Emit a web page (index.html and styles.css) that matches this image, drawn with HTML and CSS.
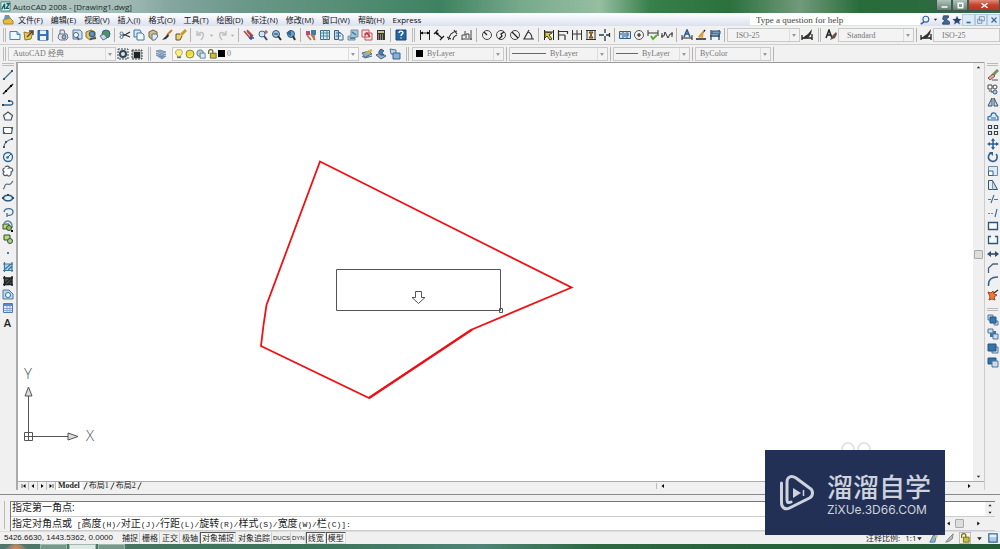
FILE: index.html
```html
<!DOCTYPE html>
<html lang="zh-CN">
<head>
<meta charset="utf-8">
<title>AutoCAD 2008 - [Drawing1.dwg]</title>
<link rel="stylesheet" href="styles.css">
</head>
<body>
<svg class="defs" aria-hidden="true">
<symbol id="new" viewBox="0 0 12 12"><path d="M1 2.500h7l3 3V10.500H1z" fill="#eef8ff" stroke="#4582ac"/><path d="M8 2.500v3h3" fill="#9cc6e0" stroke="#4582ac"/></symbol>
<symbol id="open" viewBox="0 0 12 12"><path d="M1 3l4 1 5-2-2 8-6 1z" fill="#e8c95c" stroke="#9a7420"/><path d="M4 8l5-5M6 2h4v4" fill="none" stroke="#4c4937" stroke-width="1.400"/></symbol>
<symbol id="save" viewBox="0 0 12 12"><path d="M1 1.500h10v9.500H1z" fill="#3a76bb" stroke="#28588f"/><path d="M3 1.500h6v3.500H3zM3 7h6v4H3z" fill="#e9f2fa"/></symbol>
<symbol id="print" viewBox="0 0 12 12"><path d="M3 5V1h4l1 4M2 5h8l1 4-2 2H3L1 9z" fill="#e3e6ed" stroke="#6a7387"/><circle cx="7" cy="8" r="2" fill="#a3b5cf" stroke="#4f6686"/></symbol>
<symbol id="preview" viewBox="0 0 12 12"><path d="M2 1h7l2 2v7H2z" fill="#cfe1f2" stroke="#55799f"/><circle cx="5" cy="6" r="2.500" fill="#fff" stroke="#44617f"/><path d="M6 8l2 3" stroke="#44617f" stroke-width="1.500"/></symbol>
<symbol id="publish" viewBox="0 0 12 12"><path d="M1 3l5-2 4 2v5l-5 3-4-3z" fill="#e6c758" stroke="#87703a"/><circle cx="7" cy="5" r="2.800" fill="#5a8fc8" stroke="#35567f"/><path d="M5 10l6-1" stroke="#4f5259" stroke-width="2"/></symbol>
<symbol id="globe" viewBox="0 0 12 12"><circle cx="7" cy="5" r="4" fill="#4c9464" stroke="#35608d"/><path d="M1 7l4-2 3 4-4 2z" fill="#cbd8e6" stroke="#5e7590"/></symbol>
<symbol id="cut" viewBox="0 0 12 12"><path d="M4 7l7-4M4 5l7 3" stroke="#333" stroke-width="1.200"/><circle cx="2.500" cy="4.500" r="1.500" fill="none" stroke="#51779b"/><circle cx="2.500" cy="8" r="1.500" fill="none" stroke="#51779b"/></symbol>
<symbol id="copy" viewBox="0 0 12 12"><path d="M1 1h6l1 2v5H1z" fill="#d6eafa" stroke="#3f76a6"/><path d="M4 4h5l2 2v5H4z" fill="#f5fbff" stroke="#3f76a6"/></symbol>
<symbol id="paste" viewBox="0 0 12 12"><path d="M2 3l4-2 4 2v5l-4 3-4-3z" fill="#cfbf8c" stroke="#716137"/><path d="M5 5h4l2 2-3 4H5z" fill="#e3ecf5" stroke="#5d7490"/></symbol>
<symbol id="brush" viewBox="0 0 12 12"><path d="M11 1L6 6" stroke="#c68436" stroke-width="2"/><path d="M7 5L2 10l-1 1 4-1 3-3z" fill="#2f2e31"/></symbol>
<symbol id="pencil" viewBox="0 0 12 12"><path d="M11 1L4 8" stroke="#c99a2c" stroke-width="3"/><path d="M5 5H1v6h4l2-4" fill="#edd473" stroke="#695422"/></symbol>
<symbol id="undo" viewBox="0 0 12 12"><path d="M3 5C7 1 11 5 6 11M2 2v4h4" fill="none" stroke="#bfc0c3" stroke-width="1.500"/></symbol>
<symbol id="redo" viewBox="0 0 12 12"><path d="M9 5C5 1 1 5 6 11M10 2v4H6" fill="none" stroke="#bfc0c3" stroke-width="1.500"/></symbol>
<symbol id="down" viewBox="0 0 12 12"><path d="M2 4h8L6 9z" fill="currentColor"/></symbol>
<symbol id="pan" viewBox="0 0 12 12"><path d="M1 2l6 7 2-1-5-6M4 1l6 6" stroke="#a64f4b" stroke-width="1.600" fill="none"/><path d="M8 6v5M6 9h5" stroke="#2e5890" stroke-width="1.400"/></symbol>
<symbol id="zoomin" viewBox="0 0 12 12"><circle cx="5" cy="5" r="3" fill="#cfe6f3" stroke="#406990"/><path d="M7 7l3 4" stroke="#3c5168" stroke-width="2"/><path d="M9 1v4M7 3h4" stroke="#8c4c4c"/></symbol>
<symbol id="zoomwin" viewBox="0 0 12 12"><circle cx="5" cy="5" r="3.500" fill="#9cc0d9" stroke="#35597e"/><path d="M7 7l3 4" stroke="#333" stroke-width="2"/><path d="M3 5h4" stroke="#23415f"/></symbol>
<symbol id="zoomprev" viewBox="0 0 12 12"><circle cx="6" cy="5" r="3.500" fill="#67a4c5" stroke="#315a7c"/><path d="M8 7l2 4" stroke="#333" stroke-width="2"/><path d="M1 4l5-3v6z" fill="#31659b"/></symbol>
<symbol id="props" viewBox="0 0 12 12"><path d="M1 2h4v4H1z" fill="#b74c74"/><path d="M6 1h5v5H6z" fill="#467ba9"/><path d="M2 6l4 5M6 5l4 6M9 6v5" stroke="#b96d46" stroke-width="1.600"/></symbol>
<symbol id="grid" viewBox="0 0 12 12"><path d="M1.500 1.500h9v9h-9z" fill="#d8ebf2" stroke="#3f697e"/><path d="M1 4h10M1 7h10M4.500 1v10M8 1v10" stroke="#4b879e"/></symbol>
<symbol id="palette" viewBox="0 0 12 12"><path d="M1.500 1.500h4v9h-4z" fill="#bdd4e8" stroke="#3b6287"/><path d="M6 3l4 3v5H6" fill="#e9f2fa" stroke="#3b6287"/><path d="M3 4h5M3 7h5" stroke="#356f9d"/></symbol>
<symbol id="sheet" viewBox="0 0 12 12"><path d="M4 1h7v7H8v3H1V7h3z" fill="#9fc6dc" stroke="#7e8f9d"/><path d="M5 3l4 3M3 9h5" stroke="#427394" stroke-width="1.500"/></symbol>
<symbol id="markup" viewBox="0 0 12 12"><path d="M1 1h7v7H1zM4 4h7v7H4z" fill="#f9e7e7" stroke="#c3525a"/><path d="M4 6l2-2 3 4" fill="none" stroke="#b6303b" stroke-width="1.400"/></symbol>
<symbol id="calc" viewBox="0 0 12 12"><path d="M2 1h8v10H2z" fill="#3a3532"/><path d="M3 2h6v2H3z" fill="#c5c886"/><path d="M3 6h6M3 8h6M3 10h6" stroke="#d9d2c5" stroke-dasharray="1 1"/></symbol>
<symbol id="help" viewBox="0 0 12 12"><path d="M1 1h10v10H1z" fill="#27659f" stroke="#184773"/><path d="M4 4c0-3 4-2 4 0 0 1-2 1-2 3M6 8.500v1" fill="none" stroke="#fff" stroke-width="1.400"/></symbol>
<symbol id="dlin" viewBox="0 0 12 12"><path d="M1.500 1v10M10.500 1v10M1 4h10" stroke="#222" fill="none"/><path d="M1 4l3-1.500v3zM11 4L8 2.500v3z"/></symbol>
<symbol id="dali" viewBox="0 0 12 12"><path d="M3 4l6 5M1 5l4-4M7 11l4-4" stroke="#222" stroke-width="1.300"/><path d="M2 3l4 1-2 2z"/></symbol>
<symbol id="darc" viewBox="0 0 12 12"><path d="M1.500 11C2 6 5 3 10 2M6 11c0-3 1-4 4-5M0 8l4 2M7 1l3 4" stroke="#333" fill="none" stroke-width="1.200"/></symbol>
<symbol id="dord" viewBox="0 0 12 12"><path d="M1 11V6h3V2M1 10h10M5 9V5h3v4M10 1v10" stroke="#444" fill="none"/></symbol>
<symbol id="drad" viewBox="0 0 12 12"><circle cx="6" cy="6" r="4.500" fill="none" stroke="#444"/><path d="M6 6L3 3" stroke="#222" stroke-width="1.300"/></symbol>
<symbol id="djog" viewBox="0 0 12 12"><circle cx="6" cy="6" r="4.500" fill="none" stroke="#444"/><path d="M9 3L6 5l1 2-3 3" fill="none" stroke="#222" stroke-width="1.300"/></symbol>
<symbol id="ddia" viewBox="0 0 12 12"><circle cx="6" cy="6" r="4.500" fill="none" stroke="#444"/><path d="M3 3l6 6" stroke="#222" stroke-width="1.300"/></symbol>
<symbol id="dang" viewBox="0 0 12 12"><path d="M6 1L1 10h10M5 3c3 1 4 3 4 7" fill="none" stroke="#333" stroke-width="1.200"/></symbol>
<symbol id="dquick" viewBox="0 0 12 12"><path d="M1.500 1v10M10.500 1v10M1 3h10" stroke="#222"/><path d="M2 3l7 1-3 2 3 4-2 1-3-4-2 2z" fill="#d9cf3b" stroke="#413e21"/></symbol>
<symbol id="dbase" viewBox="0 0 12 12"><path d="M1.500 1v10M1 2.500h10M1 6h7M8 6v5M10.500 2v3" stroke="#333" stroke-width="1.200" fill="none"/></symbol>
<symbol id="dcont" viewBox="0 0 12 12"><path d="M1.500 1v10M6 1v10M10.500 1v10M1 5h10" stroke="#333" fill="none"/></symbol>
<symbol id="dspace" viewBox="0 0 12 12"><path d="M1 1.500h10M1 10.500h10M2 1v10M10 1v10" stroke="#333"/><path d="M4 3h4L6 6l2 3H4l2-3z" fill="#bd822d" stroke="#674918"/></symbol>
<symbol id="dbreak" viewBox="0 0 12 12"><path d="M6 0v4M6 7v5M0 6h5M7 6h4M10.500 4v4" stroke="#24384b" stroke-width="1.300"/></symbol>
<symbol id="dtol" viewBox="0 0 12 12"><path d="M.5 2.500h11v7H.5z" fill="#cce0f1" stroke="#31618b"/><path d="M4 2v8M8 2v8M1 5h2M5 5h2M9 4v3M5 7h2" stroke="#31618b"/></symbol>
<symbol id="dcen" viewBox="0 0 12 12"><circle cx="6" cy="6" r="4.500" fill="none" stroke="#555"/><path d="M6 4v4M4 6h4" stroke="#222" stroke-width="1.200"/></symbol>
<symbol id="dinsp" viewBox="0 0 12 12"><path d="M1 1v6M11 1v6M1 4h10" stroke="#333"/><path d="M4 7l2 3 4-4" fill="none" stroke="#5cab2f" stroke-width="2"/></symbol>
<symbol id="djl" viewBox="0 0 12 12"><path d="M0 7h3l1-4 3 6 2-4h3M1 4v5M11 3v5" stroke="#333" fill="none"/></symbol>
<symbol id="dedit" viewBox="0 0 12 12"><path d="M3 8l3-7 3 7M4 5h4" fill="none" stroke="#285c91" stroke-width="1.600"/><path d="M1 6v5M11 6v5M1 9h10" stroke="#222"/></symbol>
<symbol id="dtedit" viewBox="0 0 12 12"><path d="M1 10h10M10 1L4 8" stroke="#222" stroke-width="1.500"/><path d="M9 1L3 8l5 1z" fill="#e1a33d"/></symbol>
<symbol id="dupd" viewBox="0 0 12 12"><path d="M2 1v10M10 1v10M1 7h10" stroke="#27496a" stroke-width="1.300"/><path d="M3 2h8v3H3z" fill="#6f9fc3" stroke="#315374"/></symbol>
<symbol id="dstyle" viewBox="0 0 12 12"><path d="M1 6v5M11 5v6M1 9h10" stroke="#222" stroke-width="1.300"/><path d="M11 0L7 5 4 7l-3 3 6-1 3-4z" fill="#342f28"/></symbol>
<symbol id="tstyle" viewBox="0 0 12 12"><path d="M1 9l3-8 3 8M2 6h4" fill="none" stroke="#222" stroke-width="1.500"/><path d="M11 3L7 7l-2 4 5-2 2-4z" fill="#6d5142"/></symbol>
<symbol id="gear" viewBox="0 0 12 12"><path d="M1 1h10v10H1z" fill="#dfe6ea" stroke="#394852" stroke-dasharray="2 1"/><circle cx="6" cy="6" r="3" fill="none" stroke="#33434f" stroke-width="2"/></symbol>
<symbol id="wspace" viewBox="0 0 12 12"><path d="M1 2h10v9H1z" fill="#adb8be" stroke="#444" stroke-dasharray="2 1"/><path d="M3 4h6v6H3z" fill="#232323"/></symbol>
<symbol id="layers" viewBox="0 0 12 12"><path d="M1 3l4-1 6 2-4 2zM1 5l6 2 4-1-4 3zM1 7l6 2 4-1-4 3z" fill="#8dacd0" stroke="#607fa5" stroke-width=".7"/></symbol>
<symbol id="bulb" viewBox="0 0 12 12"><path d="M4 8C-1 3 4 0 6 1c5-1 5 4 2 7v2H4z" fill="#f8ee8a" stroke="#a99833"/><path d="M4 10h4" stroke="#4f6787" stroke-width="2"/></symbol>
<symbol id="sun" viewBox="0 0 12 12"><circle cx="6" cy="6" r="4.800" fill="#eadc3e" stroke="#777733"/><path d="M3 8c2 2 5 1 6-1" fill="none" stroke="#fff7a2"/></symbol>
<symbol id="freeze" viewBox="0 0 12 12"><circle cx="5" cy="5" r="4" fill="#aecbd9" stroke="#61747e"/><path d="M5 5h6v6H5z" fill="#dcecf4" stroke="#59798d"/></symbol>
<symbol id="lock" viewBox="0 0 12 12"><path d="M2 6V3c0-3 5-3 5 0v3" fill="none" stroke="#6b6625" stroke-width="1.500"/><path d="M4 5h7v6H4z" fill="#cac13a" stroke="#625b24"/></symbol>
<symbol id="lmake" viewBox="0 0 12 12"><path d="M1 5l7-2 3 3-7 3zM1 8l3 2 7-2" fill="#8db3cb" stroke="#526d86"/><path d="M5 5l6-3" stroke="#d3b431" stroke-width="2.500"/></symbol>
<symbol id="lprev" viewBox="0 0 12 12"><path d="M1 7l5-2 5 3-5 3z" fill="#91afcb" stroke="#496586"/><path d="M9 7C4 8 2 4 6 1l3 2c-2 0-2 3 0 4z" fill="#527cad" stroke="#315681"/></symbol>
<symbol id="lstate" viewBox="0 0 12 12"><path d="M1 1l6 1v5l-5-1z" fill="#bcd5ea" stroke="#4b7198"/><path d="M4 5h7v6H4z" fill="#89b1d5" stroke="#356490"/></symbol>
<symbol id="line" viewBox="0 0 12 12"><path d="M2 10l8-8" stroke="#39739a" stroke-width="1.200"/><path d="M1 9h2v2H1zM9 1h2v2H9z" fill="#44535d"/></symbol>
<symbol id="xline" viewBox="0 0 12 12"><path d="M1 11L11 1" stroke="#222" stroke-width="1.400"/><path d="M3 7h2v2H3zM8 2h2v2H8z"/></symbol>
<symbol id="pline" viewBox="0 0 12 12"><path d="M1 9h8c3-1 2-4-1-4" fill="none" stroke="#34678c" stroke-width="1.300"/><path d="M0 8h2v2H0zM6 4h2v2H6z" fill="#31404c"/></symbol>
<symbol id="poly" viewBox="0 0 12 12"><path d="M6 2l4.500 3.500L9 10H3L1.500 5.500z" fill="#f5f8f9" stroke="#47545e" stroke-width="1.200"/></symbol>
<symbol id="rect" viewBox="0 0 12 12"><path d="M1.500 3.500h9l-1 6h-8z" fill="#fff" stroke="#365a78" stroke-width="1.200"/><path d="M1 8h2v2H1zM9 3h2v2H9z" fill="#42617a"/></symbol>
<symbol id="arc" viewBox="0 0 12 12"><path d="M1.500 11C2 6 5 3 10.500 2" fill="none" stroke="#316f9c" stroke-width="1.200"/><path d="M1 9h2v2H1zM3 4h2v2H3zM9 1h2v2H9z" fill="#44535d"/></symbol>
<symbol id="circle" viewBox="0 0 12 12"><circle cx="6" cy="6" r="4.500" fill="#e7f2fa" stroke="#30658e" stroke-width="1.300"/><path d="M5 7l4-4" stroke="#265b84"/><circle cx="5.500" cy="6.500" r="1.300" fill="#34668e"/></symbol>
<symbol id="cloud" viewBox="0 0 12 12"><path d="M3 2c3-2 5 0 4 1 4-1 5 3 2 4 1 4-3 5-4 3-3 2-5-2-3-3-2-2-1-4 1-4" fill="#fff" stroke="#4c5967" stroke-width="1.200"/></symbol>
<symbol id="spline" viewBox="0 0 12 12"><path d="M1 10c2 0 1-5 4-5 3 1 4 0 6-3" fill="none" stroke="#4d6b82" stroke-width="1.200"/></symbol>
<symbol id="ellipse" viewBox="0 0 12 12"><ellipse cx="6" cy="6" rx="4.500" ry="2.800" fill="#e3edf4" stroke="#285f8b" stroke-width="1.600"/><path d="M5 2h2v2H5zM0 5h2v2H0zM10 5h2v2h-2z" fill="#35485a"/></symbol>
<symbol id="earc" viewBox="0 0 12 12"><path d="M2 6c1-5 9-4 9 0 0 3-3 4-6 3M5 7v4" fill="none" stroke="#3d6f98" stroke-width="1.300"/></symbol>
<symbol id="insert" viewBox="0 0 12 12"><path d="M2 3c4-4 9-1 8 5" fill="none" stroke="#638ab0" stroke-width="1.500"/><path d="M1 4h6v5H1z" fill="#b9d974" stroke="#34513f"/><circle cx="7" cy="8" r="2.500" fill="#94be62" stroke="#34513f"/><path d="M9 10h2v2H9z"/></symbol>
<symbol id="block" viewBox="0 0 12 12"><path d="M2 2h6v5H2z" fill="#b9d974" stroke="#34513f"/><circle cx="8" cy="8" r="2.500" fill="#afcf88" stroke="#34513f"/></symbol>
<symbol id="point" viewBox="0 0 12 12"><path d="M5 5h2v2H5z" fill="#3687a5"/></symbol>
<symbol id="hatch" viewBox="0 0 12 12"><path d="M3 3h7v7H3z" fill="#b7d9ef"/><path d="M2.500 1v10M10 1v10M1 3h10M1 9.500h10M3 8l6-5M6 9l4-4" stroke="#40779d" stroke-width="1.200"/></symbol>
<symbol id="gradient" viewBox="0 0 12 12"><path d="M3 3h7v7H3z" fill="#555"/><path d="M2.500 1v10M10 1v10M1 3h10M1 9.500h10M3 8l6-5M5 10l5-5" stroke="#1e2327" stroke-width="1.400"/></symbol>
<symbol id="region" viewBox="0 0 12 12"><path d="M1 2h6l4 4v5H1z" fill="#bad6ee" stroke="#537ca2"/><circle cx="6" cy="7" r="2.500" fill="#f1f7fc" stroke="#3970a3"/></symbol>
<symbol id="table" viewBox="0 0 12 12"><path d="M1.500 1.500h9v9h-9z" fill="#e7f0ff" stroke="#4f78b9"/><path d="M2 2h8v2H2z" fill="#5a88cd"/><path d="M2 6.500h8M2 8.500h8M5 4v6M8 4v6" stroke="#89a6d4"/></symbol>
<symbol id="erase" viewBox="0 0 12 12"><path d="M11 1L5 7" stroke="#75935e" stroke-width="3"/><path d="M6 5L1 9l2 2 5-4z" fill="#e2a6a1" stroke="#86524a"/><path d="M5 11h6" stroke="#555"/></symbol>
<symbol id="mcopy" viewBox="0 0 12 12"><path d="M1 2h4v4H1z" fill="#fff" stroke="#444"/><circle cx="8" cy="4" r="2" fill="#fff" stroke="#444"/><circle cx="8" cy="9" r="2" fill="#accee4" stroke="#34638c"/><path d="M2 8h3v2" fill="none" stroke="#444"/></symbol>
<symbol id="mirror" viewBox="0 0 12 12"><path d="M5 2v8H1zM7 2v8h4z" fill="#b6d2e8" stroke="#3e5368"/></symbol>
<symbol id="offset" viewBox="0 0 12 12"><path d="M1 10V7l3-1c0-4 5-4 5-1l2 2v3z" fill="#d8eafa" stroke="#336a9d" stroke-width="1.200"/><path d="M4 8h5" stroke="#336a9d"/></symbol>
<symbol id="array" viewBox="0 0 12 12"><path d="M1.500 1.500h3v3h-3zM7.500 1.500h3v3h-3zM1.500 7.500h3v3h-3zM7.500 7.500h3v3h-3z" fill="#fff" stroke="#36424e" stroke-width="1.200"/></symbol>
<symbol id="move" viewBox="0 0 12 12"><path d="M6 2v8M2 6h8" stroke="#2a6098" stroke-width="1.500"/><path d="M6 0l2 3H4zM6 12l2-3H4zM0 6l3-2v4zM12 6L9 4v4z" fill="#2a6098"/></symbol>
<symbol id="rotate" viewBox="0 0 12 12"><path d="M4 2a4.400 4.400 0 1 0 5 1" fill="none" stroke="#315f90" stroke-width="1.600"/><path d="M2 1h4v4z" fill="#315f90"/></symbol>
<symbol id="scale" viewBox="0 0 12 12"><path d="M1.500 1.500h9v9h-9z" fill="#dcebf8" stroke="#6d8ca7"/><path d="M1.500 6h4.500v4.500h-4.500z" fill="#fff" stroke="#36648e"/></symbol>
<symbol id="stretch" viewBox="0 0 12 12"><path d="M1.500 1.500h4v9h-4z" fill="#e2edf6" stroke="#38536c"/><path d="M5.500 1.500l5 9h-5" fill="#c5dbed" stroke="#38536c"/></symbol>
<symbol id="trim" viewBox="0 0 12 12"><path d="M1 6.500h3M7 6.500h4" stroke="#527898"/><path d="M7 2L4 10" stroke="#3a7198" stroke-width="1.200"/></symbol>
<symbol id="extend" viewBox="0 0 12 12"><path d="M1 6.500h6" stroke="#66889f" stroke-dasharray="2 1"/><path d="M10 2L8 10" stroke="#3971a3" stroke-width="1.200"/></symbol>
<symbol id="breakpt" viewBox="0 0 12 12"><path d="M1.500 2.500h9v7h-9z" fill="#f4faff" stroke="#315575" stroke-width="1.300"/></symbol>
<symbol id="break" viewBox="0 0 12 12"><path d="M4 2.500H1.500v7h9v-7H8" fill="#f4faff" stroke="#315575" stroke-width="1.300"/></symbol>
<symbol id="join" viewBox="0 0 12 12"><path d="M2 6h8" stroke="#222" stroke-width="1.300"/><path d="M0 6l4-3v6zM12 6L8 3v6z" fill="#254f76"/></symbol>
<symbol id="chamfer" viewBox="0 0 12 12"><path d="M1.500 11V6L6 2h5" fill="none" stroke="#456580" stroke-width="1.300"/></symbol>
<symbol id="fillet" viewBox="0 0 12 12"><path d="M1.500 11C1 5 4 2 11 2" fill="none" stroke="#32638c" stroke-width="1.500"/></symbol>
<symbol id="explode" viewBox="0 0 12 12"><path d="M1 3l3 1 2-2 1 3 3 1-3 2 1 3-3-1-3 1 1-3z" fill="#e67d38" stroke="#a4471f"/><path d="M7 4l4-3" stroke="#333" stroke-width="1.300"/></symbol>
<symbol id="front" viewBox="0 0 12 12"><path d="M1 1h5v5H1zM7 7h4v4H7z" fill="#c0d8ea" stroke="#54799b"/><path d="M3 3h6v6H3z" fill="#3377b1" stroke="#255682"/></symbol>
<symbol id="back" viewBox="0 0 12 12"><path d="M3 3h6v6H3z" fill="#3377b1"/><path d="M1 1h5v4H1zM6 6h5v5H6z" fill="#c9dceb" stroke="#54799b"/></symbol>
<symbol id="above" viewBox="0 0 12 12"><path d="M5 5h6v6H5z" fill="#c9dceb" stroke="#54799b"/><path d="M1 2h8v7H1z" fill="#3773a9" stroke="#255682"/></symbol>
<symbol id="under" viewBox="0 0 12 12"><path d="M1 2h8v6H1z" fill="#3773a9" stroke="#255682"/><path d="M5 5h6v6H5z" fill="#c9dceb" stroke="#54799b"/></symbol>
<symbol id="star" viewBox="0 0 12 12"><path d="M6 1l1.500 3.500 4 .5-3 2.500 1 4L6 9l-3.500 2.500 1-4L.5 5l4-.5z" fill="#26456f"/></symbol>
<symbol id="find" viewBox="0 0 12 12"><circle cx="7" cy="5" r="3.500" fill="#eef5ff" stroke="#3c66a2" stroke-width="1.400"/><path d="M5 8l-4 3" stroke="#3c66a2" stroke-width="2"/></symbol>
<symbol id="comm" viewBox="0 0 12 12"><path d="M3 1h6v2L6 5l4 3v3H2V9l3-2-3-2z" fill="#456994" stroke="#27415f"/></symbol>
<symbol id="annot" viewBox="0 0 12 12"><path d="M1 11l4-8h4l-2 8z" fill="#91b1d1" stroke="#526e8e"/><path d="M7 2l3-1 1 3-3 2z" fill="#dfc75b"/></symbol>
<symbol id="annoff" viewBox="0 0 12 12"><path d="M2 11l4-5 5-5-1 6-4 3z" fill="#bbb" stroke="#777"/></symbol>
<symbol id="clean" viewBox="0 0 12 12"><path d="M1 1h10v10H1z" fill="#abc9ea" stroke="#36648e" stroke-width="1.500"/><path d="M2 2h8v3H2z" fill="#e4f2ff"/></symbol>
</svg>

<div class="app">
<header class="title">
<svg class="logo" viewBox="0 0 12 12" aria-hidden="true"><path d="M1 1h10v10H1z" fill="#d9f1ed" stroke="#377d7c"/><path d="M2 9l3-6v6M7 3h3L7 8h3" fill="none" stroke="#175e61" stroke-width="1.500"/></svg>
<h1>AutoCAD 2008 - [Drawing1.dwg]</h1>
<div class="winbtns"><button aria-label="最小化"><svg viewBox="0 0 12 12"><path d="M2 7h8v2H2z" fill="#fff"/></svg></button><button aria-label="最大化"><svg viewBox="0 0 12 12"><path d="M3 3h6v6H3z" fill="none" stroke="#fff" stroke-width="2"/></svg></button><button class="close" aria-label="关闭"><svg viewBox="0 0 12 12"><path d="M2 3l8 6M10 3L2 9" stroke="#fff" stroke-width="2"/></svg></button></div>
</header>

<nav class="menu">
<svg class="doc" viewBox="0 0 12 12" aria-hidden="true"><path d="M3 1h4l2 4H2z" fill="#579bc5"/><path d="M1 6l7-2 3 3v3H2z" fill="#e7bd3b" stroke="#a98422"/></svg>
<button>文件(F)</button><button>编辑(E)</button><button>视图(V)</button><button>插入(I)</button><button>格式(O)</button><button>工具(T)</button><button>绘图(D)</button><button>标注(N)</button><button>修改(M)</button><button>窗口(W)</button><button>帮助(H)</button><button>Express</button>
<input class="ask" type="text" aria-label="帮助搜索" value="Type a question for help">
<div class="menuend"><button aria-label="搜索"><svg><use href="#find"/></svg></button><button class="tiny" aria-label="搜索选项"><svg><use href="#down"/></svg></button><button aria-label="通讯中心"><svg><use href="#comm"/></svg></button><button aria-label="收藏夹"><svg><use href="#star"/></svg></button><button class="mdi" aria-label="最小化图形"><svg viewBox="0 0 12 12"><path d="M3 9h5" stroke="#46698d" stroke-width="2"/></svg></button><button class="mdi" aria-label="还原图形"><svg viewBox="0 0 12 12"><path d="M4 2h6v5H4zM2 5h5v5H2z" fill="#e9f3fb" stroke="#6d89a4"/></svg></button><button class="mdi" aria-label="关闭图形"><svg viewBox="0 0 12 12"><path d="M3 3l6 6M9 3L3 9" stroke="#46698d" stroke-width="1.500"/></svg></button></div>
</nav>

<div class="bar">
<i class="grip"></i>
<button aria-label="新建"><svg><use href="#new"/></svg></button><button aria-label="打开"><svg><use href="#open"/></svg></button><button aria-label="保存"><svg><use href="#save"/></svg></button><i class="sep"></i>
<button aria-label="打印"><svg><use href="#print"/></svg></button><button aria-label="打印预览"><svg><use href="#preview"/></svg></button><button aria-label="发布"><svg><use href="#publish"/></svg></button><button aria-label="三维 DWF"><svg><use href="#globe"/></svg></button><i class="sep"></i>
<button aria-label="剪切"><svg><use href="#cut"/></svg></button><button aria-label="复制"><svg><use href="#copy"/></svg></button><button aria-label="粘贴"><svg><use href="#paste"/></svg></button><button aria-label="特性匹配"><svg><use href="#brush"/></svg></button><button aria-label="块编辑器"><svg><use href="#pencil"/></svg></button><i class="sep"></i>
<button aria-label="放弃"><svg><use href="#undo"/></svg></button><button class="tiny pale" aria-label="放弃列表"><svg><use href="#down"/></svg></button><button aria-label="重做"><svg><use href="#redo"/></svg></button><button class="tiny pale" aria-label="重做列表"><svg><use href="#down"/></svg></button><i class="sep"></i>
<button aria-label="实时平移"><svg><use href="#pan"/></svg></button><button aria-label="实时缩放"><svg><use href="#zoomin"/></svg></button><button aria-label="窗口缩放"><svg><use href="#zoomwin"/></svg></button><button aria-label="缩放上一个"><svg><use href="#zoomprev"/></svg></button><i class="sep"></i>
<button aria-label="特性"><svg><use href="#props"/></svg></button><button aria-label="设计中心"><svg><use href="#grid"/></svg></button><button aria-label="工具选项板"><svg><use href="#palette"/></svg></button><button aria-label="图纸集管理器"><svg><use href="#sheet"/></svg></button><button aria-label="标记集管理器"><svg><use href="#markup"/></svg></button><button aria-label="快速计算器"><svg><use href="#calc"/></svg></button><i class="sep"></i>
<button aria-label="帮助"><svg><use href="#help"/></svg></button>
<i class="grip split"></i>
<button aria-label="线性"><svg><use href="#dlin"/></svg></button><button aria-label="对齐"><svg><use href="#dali"/></svg></button><button aria-label="弧长"><svg><use href="#darc"/></svg></button><button aria-label="坐标"><svg><use href="#dord"/></svg></button><i class="sep"></i>
<button aria-label="半径"><svg><use href="#drad"/></svg></button><button aria-label="折弯"><svg><use href="#djog"/></svg></button><button aria-label="直径"><svg><use href="#ddia"/></svg></button><button aria-label="角度"><svg><use href="#dang"/></svg></button><i class="sep"></i>
<button aria-label="快速标注"><svg><use href="#dquick"/></svg></button><button aria-label="基线"><svg><use href="#dbase"/></svg></button><button aria-label="连续"><svg><use href="#dcont"/></svg></button><button aria-label="标注间距"><svg><use href="#dspace"/></svg></button><button aria-label="标注打断"><svg><use href="#dbreak"/></svg></button><i class="sep"></i>
<button aria-label="公差"><svg><use href="#dtol"/></svg></button><button aria-label="圆心标记"><svg><use href="#dcen"/></svg></button><button aria-label="检验"><svg><use href="#dinsp"/></svg></button><button aria-label="折弯线性"><svg><use href="#djl"/></svg></button><i class="sep"></i>
<button aria-label="编辑标注"><svg><use href="#dedit"/></svg></button><button aria-label="编辑标注文字"><svg><use href="#dtedit"/></svg></button><button aria-label="标注更新"><svg><use href="#dupd"/></svg></button><i class="sep thin"></i>
<span class="combo dim"><select aria-label="标注样式"><option>ISO-25</option></select></span>
<button aria-label="标注样式管理器"><svg><use href="#dstyle"/></svg></button>
<i class="grip split"></i>
<button aria-label="文字样式管理器"><svg><use href="#tstyle"/></svg></button>
<span class="combo std"><select aria-label="文字样式"><option>Standard</option></select></span><i class="sep thin"></i>
<button aria-label="标注样式设置"><svg><use href="#dstyle"/></svg></button>
<span class="combo last"><select aria-label="当前标注样式"><option>ISO-25</option></select></span>
</div>

<div class="bar second">
<i class="grip"></i>
<span class="combo work"><select aria-label="工作空间"><option>AutoCAD 经典</option></select></span>
<button aria-label="工作空间设置"><svg><use href="#gear"/></svg></button><button aria-label="我的工作空间"><svg><use href="#wspace"/></svg></button>
<i class="grip split"></i>
<button aria-label="图层特性管理器"><svg><use href="#layers"/></svg></button>
<span class="combo layer"><svg><use href="#bulb"/></svg><svg><use href="#sun"/></svg><svg><use href="#freeze"/></svg><svg><use href="#lock"/></svg><i class="swatch"></i><select aria-label="图层"><option>0</option></select></span>
<button aria-label="置为当前"><svg><use href="#lmake"/></svg></button><button aria-label="上一个图层"><svg><use href="#lprev"/></svg></button><button aria-label="图层状态"><svg><use href="#lstate"/></svg></button>
<i class="grip split"></i>
<span class="combo color"><i class="swatch"></i><select aria-label="颜色"><option>ByLayer</option></select></span><i class="sep thin"></i>
<span class="combo ltype"><i class="rule"></i><select aria-label="线型"><option>ByLayer</option></select></span><i class="sep thin"></i>
<span class="combo weight"><i class="rule"></i><select aria-label="线宽"><option>ByLayer</option></select></span><i class="sep thin"></i>
<span class="combo plot"><select aria-label="打印样式"><option>ByColor</option></select></span>
<i class="sep thin"></i>
</div>

<div class="work-area">
<aside class="palette">
<i class="hgrip"></i>
<div class="tools draw"><button aria-label="直线"><svg><use href="#line"/></svg></button><button aria-label="构造线"><svg><use href="#xline"/></svg></button><button aria-label="多段线"><svg><use href="#pline"/></svg></button><button aria-label="正多边形"><svg><use href="#poly"/></svg></button><button aria-label="矩形"><svg><use href="#rect"/></svg></button><button aria-label="圆弧"><svg><use href="#arc"/></svg></button><button aria-label="圆"><svg><use href="#circle"/></svg></button><button aria-label="修订云线"><svg><use href="#cloud"/></svg></button><button aria-label="样条曲线"><svg><use href="#spline"/></svg></button><button aria-label="椭圆"><svg><use href="#ellipse"/></svg></button><button aria-label="椭圆弧"><svg><use href="#earc"/></svg></button><button aria-label="插入块"><svg><use href="#insert"/></svg></button><button aria-label="创建块"><svg><use href="#block"/></svg></button><button aria-label="点"><svg><use href="#point"/></svg></button><button aria-label="图案填充"><svg><use href="#hatch"/></svg></button><button aria-label="渐变色"><svg><use href="#gradient"/></svg></button><button aria-label="面域"><svg><use href="#region"/></svg></button><button aria-label="表格"><svg><use href="#table"/></svg></button><button class="mtext" aria-label="多行文字">A</button></div>
</aside>

<main class="sheet">
<div class="view">
<svg class="canvas" viewBox="18 63 955 410" preserveAspectRatio="xMinYMin meet" role="img" aria-label="图形">
<g fill="none" stroke="#e4e4e4" stroke-width="2"><circle cx="848" cy="449" r="6"/><circle cx="864" cy="449" r="6"/></g>
<path d="M320 161.500L571.500 287.500 472 329.500 369 398 261 346 263.500 325 266.500 305z" fill="none" stroke="#f01014" stroke-width="1.800"/>
<path d="M472 329.500L369 398" stroke="#f01014" stroke-width="2.200"/>
<path d="M336.500 269.500h164v41h-164zM499.500 308.500h3v4h-3zM415.500 291.500h6v6h3.500l-6.500 6-6.500-6h3.500z" fill="none" stroke="#555"/>
<path d="M24.500 432.500h8v8h-8zM28.500 388v52.500M24.500 436.500H78" fill="none" stroke="#555"/>
<path d="M28.500 387l-3.500 9h7zM78 436.500l-10-3.500v7z" fill="#ddd" stroke="#555"/>
<text x="24" y="379" class="axis">Y</text><text x="86" y="441" class="axis">X</text>
</svg>
<div class="vscroll"><button aria-label="向上滚动"><svg><use href="#down"/></svg></button><i class="thumb"></i><button aria-label="向下滚动"><svg><use href="#down"/></svg></button></div>
</div>
<div class="tabs">
<div class="tabnav"><button aria-label="第一个"><svg viewBox="0 0 12 12"><path d="M2 2v8" stroke="#333" stroke-width="1.500"/><path d="M9 2v8L4 6z"/></svg></button><button aria-label="上一个"><svg viewBox="0 0 12 12"><path d="M8 2v8L3 6z"/></svg></button><button aria-label="下一个"><svg viewBox="0 0 12 12"><path d="M4 2v8l5-4z"/></svg></button><button aria-label="最后一个"><svg viewBox="0 0 12 12"><path d="M3 2v8l5-4z"/><path d="M10 2v8" stroke="#333" stroke-width="1.500"/></svg></button></div>
<button class="tab active">Model</button><i class="slash"></i><button class="tab">布局1</button><i class="slash"></i><button class="tab">布局2</button><i class="slash"></i>
<div class="hscroll"><button aria-label="向左滚动"><svg viewBox="0 0 12 12"><path d="M8 2v8L3 6z"/></svg></button><button aria-label="向右滚动"><svg viewBox="0 0 12 12"><path d="M4 2v8l5-4z"/></svg></button></div>
</div>
</main>

<aside class="palette right">
<i class="hgrip"></i>
<div class="tools modify"><button aria-label="删除"><svg><use href="#erase"/></svg></button><button aria-label="复制对象"><svg><use href="#mcopy"/></svg></button><button aria-label="镜像"><svg><use href="#mirror"/></svg></button><button aria-label="偏移"><svg><use href="#offset"/></svg></button><button aria-label="阵列"><svg><use href="#array"/></svg></button><button aria-label="移动"><svg><use href="#move"/></svg></button><button aria-label="旋转"><svg><use href="#rotate"/></svg></button><button aria-label="缩放"><svg><use href="#scale"/></svg></button><button aria-label="拉伸"><svg><use href="#stretch"/></svg></button><button aria-label="修剪"><svg><use href="#trim"/></svg></button><button aria-label="延伸"><svg><use href="#extend"/></svg></button><button aria-label="打断于点"><svg><use href="#breakpt"/></svg></button><button aria-label="打断"><svg><use href="#break"/></svg></button><button aria-label="合并"><svg><use href="#join"/></svg></button><button aria-label="倒角"><svg><use href="#chamfer"/></svg></button><button aria-label="圆角"><svg><use href="#fillet"/></svg></button><button aria-label="分解"><svg><use href="#explode"/></svg></button></div>
<i class="hgrip"></i>
<div class="tools order"><button aria-label="前置"><svg><use href="#front"/></svg></button><button aria-label="后置"><svg><use href="#back"/></svg></button><button aria-label="置于对象之上"><svg><use href="#above"/></svg></button><button aria-label="置于对象之下"><svg><use href="#under"/></svg></button></div>
</aside>
</div>

<section class="command">
<div class="cmdgrip"></div>
<div class="cmdbody">
<div class="history"><p>指定第一角点:</p><div class="spin"><svg class="up"><use href="#down"/></svg><svg><use href="#down"/></svg></div></div>
<div class="prompt"><label for="cmd">指定对角点或<span> [</span>高度<span>(H)/</span>对正<span>(J)/</span>行距<span>(L)/</span>旋转<span>(R)/</span>样式<span>(S)/</span>宽度<span>(W)/</span>栏<span>(C)]:</span></label><input id="cmd" type="text"><div class="cmdscroll"><svg viewBox="0 0 12 12"><path d="M9 1v10L3 6z"/></svg><i class="thumb"></i><svg viewBox="0 0 12 12"><path d="M3 1v10l6-5z"/></svg></div></div>
</div>
</section>

<footer class="status">
<output>5426.6630, 1443.5362, 0.0000</output>
<div class="modes"><button>捕捉</button><button>栅格</button><button>正交</button><button>极轴</button><button class="on">对象捕捉</button><button>对象追踪</button><button class="latin">DUCS</button><button class="latin">DYN</button><button class="on">线宽</button><button class="on">模型</button></div>
<div class="tray"><span>注释比例:</span><button class="ratio">1:1<svg><use href="#down"/></svg></button><button aria-label="注释可见性"><svg><use href="#annot"/></svg></button><button aria-label="自动添加比例"><svg><use href="#annoff"/></svg></button><button class="locked" aria-label="锁定"><svg><use href="#lock"/></svg></button><button class="tiny" aria-label="状态栏菜单"><svg><use href="#down"/></svg></button><button aria-label="全屏显示"><svg><use href="#clean"/></svg></button></div>
</footer>
<div class="taskbar"><i class="orb"></i><i class="task"></i><i class="task lit"></i><i class="task"></i></div>

<div class="brand">
<svg viewBox="0 0 36 36" aria-hidden="true"><g fill="none" stroke="#cdd2dc" stroke-linecap="round" stroke-linejoin="round"><path d="M2.500 8v20c0 5 4 7 8 5l20-10c4-2 4-8 0-10L17 3C12 0 8 2 8 7v18c0 3 2 3 4 2" stroke-width="3"/></g><path d="M14 13l8 5-8 5z" fill="#cdd2dc"/><path d="M24.500 15v6" stroke="#cdd2dc" stroke-width="1.500"/></svg>
<div><strong>溜溜自学</strong><small>ZiXUe.3D66.COM</small></div>
</div>
</div>
</body>
</html>
```

FILE: styles.css
```css
* { box-sizing: border-box; }
body { margin: 0; font-family: "Open Sans", "Noto Sans CJK SC", sans-serif; font-size: 8px; color: #222; }
button { display: flex; align-items: center; justify-content: center; flex: none; margin: 0; padding: 0; border: 0; background: none; font: inherit; color: inherit; }
select, input { min-width: 0; margin: 0; padding: 0; border: 0; border-radius: 0; outline: 0; background: transparent; font: inherit; color: inherit; }
svg { display: block; flex: none; }
button svg { width: 12px; height: 12px; }
.defs { position: absolute; width: 0; height: 0; }
.app { position: relative; display: flex; flex-direction: column; height: 100vh; overflow: hidden; background: #f0f0f0; }

.title { display: flex; align-items: center; flex: none; height: 13px; background: linear-gradient(90deg, #b9cbc8 0, #a4bcb6 12%, #84a69f 17%, #6c988a 24%, #568e76 34%, #3d8260 44%, #77a98b 52%, #96bea1 60%, #377f4b 65%, #2b713e 73%, #719a7a 80%, #286c3b 86%, #2e6942); }
.logo { width: 11px; height: 11px; }
.title h1 { flex: 1; margin: 0 2px; font: 8px/12px "Open Sans", sans-serif; color: #1b2a2b; }
.winbtns { display: flex; align-self: flex-start; }
.winbtns button { width: 16px; height: 11px; border: 1px solid #42574f; border-top: 0; background: linear-gradient(#b1c5ba, #617f70); }
.winbtns svg { width: 9px; height: 9px; }
.winbtns .close { width: 32px; background: linear-gradient(#de8d7c, #c5432d 50%, #b83521); }

.menu { display: flex; align-items: center; flex: none; height: 13px; background: linear-gradient(#fff, #dbe1f1); line-height: 12px; }
.doc { width: 12px; height: 12px; margin-left: 2px; }
.menu > button { padding: 0 4px; color: #111; }
.ask { width: 170px; height: 11px; margin-left: auto; padding-left: 6px; background: #fff; font: 9px "Liberation Serif", serif; color: #444; }
.menuend { display: flex; width: 80px; }
.menuend button { flex: 1; height: 12px; }
.menuend svg { width: 10px; height: 10px; }
.menuend .tiny svg { width: 5px; height: 5px; }
.menuend .mdi { border: 1px solid #b4cbe0; background: #dcebf9; }

.bar { display: flex; align-items: center; flex: none; height: 19px; overflow: hidden; border-bottom: 1px solid #cfcfcf; background: #f1f1f1; }
.bar > button { width: 14px; height: 16px; }
.bar > .tiny { width: 7px; }
.tiny svg { width: 5px; height: 5px; }
.pale { color: #aaa; }
.second { height: 17px; border-bottom: 0; }
.grip { flex: none; width: 3px; height: 14px; margin: 0 2px 0 3px; border-right: 1px solid #bbb; border-left: 1px solid #bbb; }
.split { margin: 0 3px 0 4px; }
.sep { flex: none; width: 1px; height: 14px; margin: 0 3px 0 2px; background: #b4b4b4; }
.thin { margin: 0 2px; }
.combo { position: relative; display: flex; align-items: center; flex: none; height: 14px; border: 1px solid #c9c9c9; background: #f3f3f3; font: 8px "Liberation Serif", "Noto Sans CJK SC", serif; color: #777; }
.combo::after { content: ""; position: absolute; right: 3px; top: 5px; border: 2px solid transparent; border-top: 3px solid #999; }
.combo::before { content: ""; position: absolute; right: 9px; top: 0; bottom: 0; border-left: 1px solid #ddd; }
.combo select { flex: 1; height: 12px; padding-left: 4px; appearance: none; opacity: 1; }
.combo svg { width: 10px; height: 10px; }
.dim { width: 73px; }
.dim select, .std select { padding-left: 8px; }
.std { width: 76px; }
.last { flex: 1; }
.last select { padding-left: 8px; }
.last::after, .last::before { display: none; }
.work { width: 108px; }
.layer { width: 187px; gap: 1px; margin: 0 1px 0 4px; padding-left: 1px; background: #f8f8f8; }
.swatch { flex: none; width: 7px; height: 7px; background: #000; }
.layer select { padding-left: 1px; }
.color { width: 92px; padding-left: 3px; }
.ltype { width: 99px; padding-left: 2px; }
.weight { width: 77px; padding-left: 2px; }
.rule { width: 34px; border-top: 1px solid #666; }
.weight .rule { width: 22px; }
.plot { width: 76px; }

.work-area { display: flex; flex: 1; min-height: 0; }
.palette { flex: none; width: 16px; }
.hgrip { display: block; height: 3px; margin: 1px 2px 2px; border-top: 1px solid #bbb; border-bottom: 1px solid #bbb; }
.tools { display: flex; flex-direction: column; }
.tools button { flex: 1; width: 15px; }
.draw { height: 262px; }
.modify { height: 234px; margin-bottom: 6px; }
.order { height: 56px; }
.right { border-left: 1px solid #ccc; }
.mtext { font-size: 11px; font-weight: 600; }
.sheet { display: flex; flex-direction: column; flex: 1; min-width: 0; border-top: 1px solid #999; border-left: 2px solid #aaa; }
.view { display: flex; flex: 1; min-height: 0; background: #fff; }
.canvas { flex: 1; min-width: 0; height: 100%; }
.axis { font: 300 15px "Open Sans", sans-serif; fill: #555; }
.vscroll { display: flex; flex-direction: column; align-items: center; justify-content: space-between; flex: none; width: 11px; background: #f0f0f0; }
.vscroll svg { width: 5px; height: 9px; }
.vscroll button:first-child { transform: rotate(180deg); }
.thumb { width: 9px; height: 9px; border: 1px solid #aaa; border-radius: 1px; background: #ddd; }
.vscroll .thumb { margin-bottom: 36px; }
.tabs { display: flex; align-items: center; flex: none; height: 9px; border-top: 1px solid #aaa; font-family: "Liberation Serif", "Noto Sans CJK SC", serif; line-height: 8px; }
.tabnav { display: flex; width: 38px; padding-left: 2px; background: #f0f0f0; }
.tabnav button { flex: 1; height: 8px; border-right: 1px solid #bbb; }
.tabnav svg, .hscroll svg { width: 6px; height: 6px; }
.tab { height: 8px; }
.active { padding: 0 2px; background: #fff; font-weight: 700; }
.slash { width: 1px; height: 8px; margin: 0 3px; background: #444; transform: rotate(25deg); }
.hscroll { display: flex; justify-content: space-between; width: 34%; margin-left: auto; padding: 0 12px 0 3px; border-left: 1px solid #bbb; }

.command { display: flex; flex: none; margin-top: 4px; padding: 6px 5px 0 4px; border-top: 1px solid #888; }
.cmdgrip { width: 6px; margin-bottom: 2px; border-left: 1px solid #bbb; }
.cmdbody { flex: 1; border-top: 1px solid #777; border-left: 1px solid #777; background: #fff; font-size: 10px; line-height: 13px; }
.history, .prompt { display: flex; height: 15px; border-bottom: 1px solid #ccc; padding-left: 1px; }
.prompt { height: 14px; }
.history p { flex: 1; margin: 0; line-height: 10px; }
.prompt label { font-family: "Noto Sans CJK SC", sans-serif; line-height: 11px; white-space: pre; }
.prompt span { font: 8px "Liberation Mono", monospace; }
.prompt input { flex: 1; }
.spin { display: flex; flex-direction: column; justify-content: space-around; width: 10px; padding-left: 2px; background: #f0f0f0; }
.spin svg { width: 6px; height: 5px; }
.spin .up { transform: rotate(180deg); }
.cmdscroll { display: flex; align-items: center; gap: 12px; width: 50px; padding-left: 1px; background: #f0f0f0; }
.cmdscroll svg { width: 5px; height: 5px; }
.cmdscroll .thumb { margin-left: -8px; }

.status { display: flex; align-items: center; flex: none; height: 13px; border-top: 1px solid #ddd; line-height: 10px; }
.status output { flex: none; width: 120px; padding-left: 4px; font-family: "Liberation Sans", sans-serif; white-space: nowrap; }
.modes { display: flex; }
.modes button { height: 12px; padding: 0 1px; border: 1px solid transparent; border-right-color: #ccc; }
.modes .latin { padding: 0; font-family: "Liberation Sans", sans-serif; font-size: 6px; }
.modes .on { border-color: #555 #ddd #ddd #555; background: #f8f8f8; }
.tray { display: flex; align-items: center; width: 136px; margin-left: auto; padding: 0 2px; justify-content: space-between; }
.tray svg { width: 10px; height: 10px; }
.tray .ratio svg { width: 7px; height: 7px; }
.tray .tiny svg { width: 7px; height: 7px; }
.locked { border: 1px solid #bbb; background: #faf6dc; }

.taskbar { display: flex; flex: none; gap: 2px; height: 5px; overflow: hidden; background: linear-gradient(90deg, #51776a, #3a7358 30%, #4f8476 48%, #2c6841 60%, #225a35); }
.orb { width: 28px; height: 28px; margin: 0 8px 0 2px; border-radius: 50%; background: radial-gradient(circle at 50% 20%, #e28c4c, #487497 50%); }
.task { width: 27px; height: 8px; border: 1px solid #9fb9ae; background: #77988b; }
.lit { background: #dfe8e5; }

.brand { position: absolute; right: 55px; bottom: 14px; display: flex; align-items: center; gap: 12px; height: 85px; width: 180px; padding: 0 14px; background: #223055; color: #cdd2dc; }
.brand svg { width: 36px; height: 36px; }
.brand strong { display: block; font: 500 26px/32px "Noto Sans CJK SC", sans-serif; }
.brand small { display: block; padding-top: 2px; font: 12px/12px Inter, sans-serif; }
```
